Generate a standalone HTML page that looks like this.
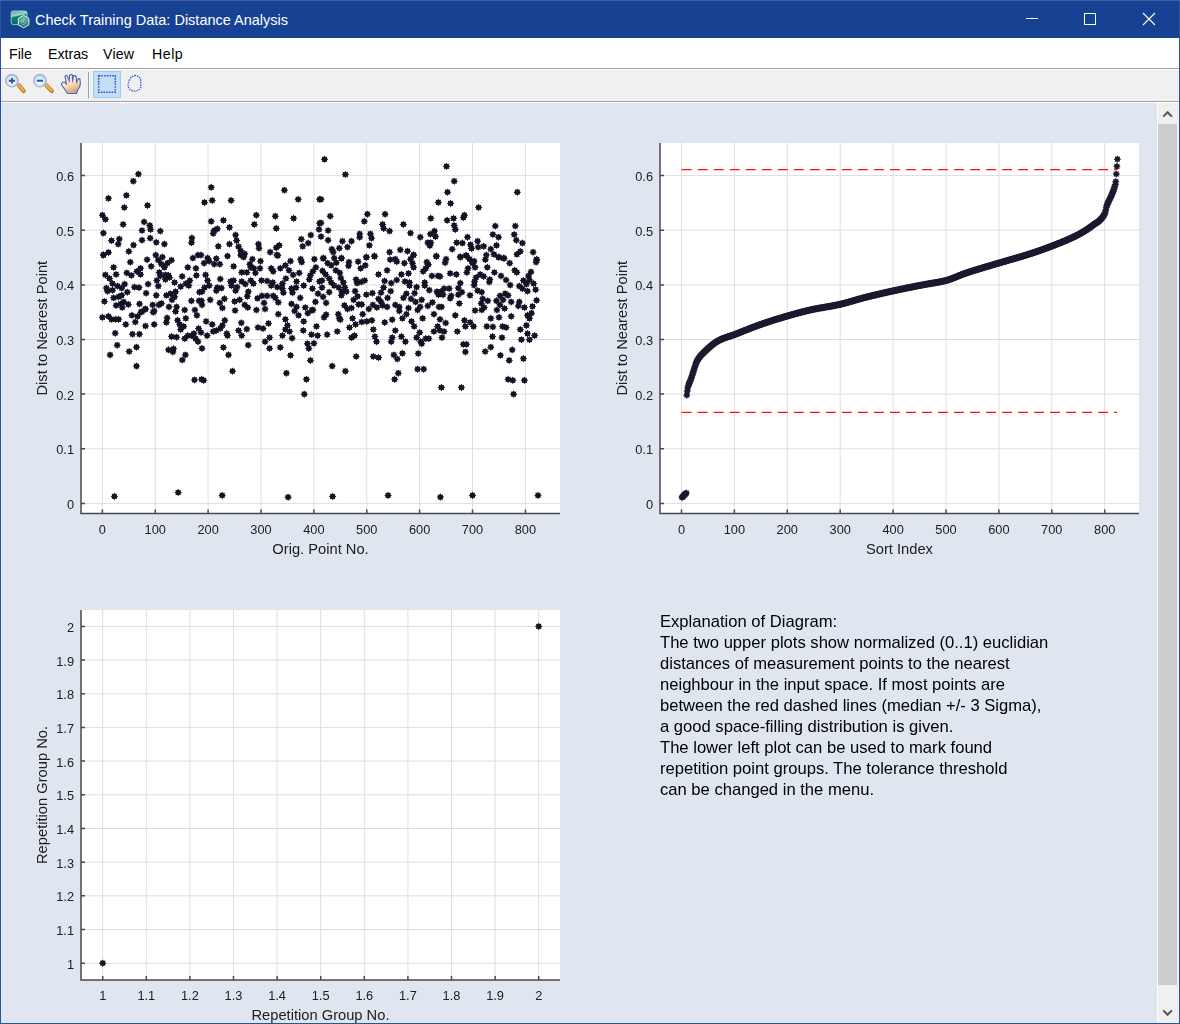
<!DOCTYPE html>
<html><head><meta charset="utf-8"><title>Check Training Data: Distance Analysis</title>
<style>
html,body{margin:0;padding:0;width:1180px;height:1024px;overflow:hidden;background:#dfe6f0;font-family:"Liberation Sans",sans-serif;}
#title{position:absolute;left:0;top:0;width:1180px;height:38px;background:#174294;color:#fff;}
#title .t{position:absolute;left:35px;top:11px;font-size:14.5px;line-height:18px;white-space:nowrap;}
#menu{position:absolute;left:1px;top:38px;width:1178px;height:30px;background:#fff;border-bottom:1px solid #a0a0a0;}
#menu span{position:absolute;top:7px;font-size:14.2px;line-height:18px;color:#000;}
#toolbar{position:absolute;left:1px;top:69px;width:1178px;height:31px;background:#f0f0f0;border-top:1px solid #fff;border-bottom:1px solid #a0a0a0;}
#gap{position:absolute;left:1px;top:102px;width:1178px;height:1px;background:#fff;}
#plots{position:absolute;left:0;top:0;will-change:transform;font-family:"Liberation Sans",sans-serif;fill:#202020;}
#sb{position:absolute;left:1157px;top:103px;width:22px;height:920px;background:#f0f0f0;border-left:1px solid #fff;box-sizing:border-box;}
#thumb{position:absolute;left:1158px;top:124px;width:19px;height:861px;background:#cdcdcd;}
.bl{position:absolute;left:0;top:0;width:1px;height:1024px;background:#2c51a0;}
.br{position:absolute;left:1179px;top:0;width:1px;height:1024px;background:#2c51a0;}
.bb{position:absolute;left:0;top:1023px;width:1180px;height:1px;background:#2c51a0;}
.bt{position:absolute;left:0;top:0;width:1180px;height:1px;background:#3d5fa6;}
</style></head><body>
<div id="title">
<svg style="position:absolute;left:0;top:0" width="40" height="38" viewBox="0 0 40 38">
<defs><linearGradient id="tg" x1="0" y1="0" x2="0.25" y2="1"><stop offset="0" stop-color="#3aa894"/><stop offset="0.38" stop-color="#9ed6cb"/><stop offset="0.48" stop-color="#0d7f70"/><stop offset="1" stop-color="#06695b"/></linearGradient>
<linearGradient id="hg" x1="0" y1="0" x2="0" y2="1"><stop offset="0" stop-color="#5fb5a6"/><stop offset="1" stop-color="#0f7263"/></linearGradient></defs>
<rect x="11.2" y="11" width="15.8" height="13.6" rx="2" fill="url(#tg)" stroke="#cfe9e3" stroke-width="0.7"/>
<path d="M23.6 15.3L28.9 18.4V24.8L23.6 27.8L18.3 24.8V18.4Z" fill="url(#hg)" stroke="#e6f3ef" stroke-width="1"/>
<path d="M23.5 18L26.8 21.5L23.5 25L20.2 21.5Z" fill="none" stroke="#f4fbf9" stroke-width="0.9" stroke-dasharray="1 0.7"/>
<path d="M21.8 21.5H25.2M23.5 19.8V23.2" stroke="#d8efea" stroke-width="0.8" stroke-dasharray="0.9 0.8"/>
</svg>
<div class="t">Check Training Data: Distance Analysis</div>
<svg style="position:absolute;left:1020px;top:8px" width="150" height="22" viewBox="0 0 150 22">
<path d="M6 10.5H18" stroke="#fff" stroke-width="1"/>
<rect x="64.5" y="5.5" width="11" height="11" fill="none" stroke="#fff" stroke-width="1"/>
<path d="M123 5L135 17M135 5L123 17" stroke="#fff" stroke-width="1.1"/>
</svg>
</div>
<div id="menu"><span style="left:8px">File</span><span style="left:47px">Extras</span><span style="left:102px;letter-spacing:0.2px">View</span><span style="left:151px;letter-spacing:0.5px">Help</span></div>
<div id="toolbar">
<svg width="160" height="31" viewBox="0 69 160 31" style="position:absolute;left:-1px;top:-1px">
<defs><radialGradient id="lens" cx="0.45" cy="0.6" r="0.65"><stop offset="0" stop-color="#ffffff"/><stop offset="0.55" stop-color="#d2f1f4"/><stop offset="1" stop-color="#a6dbe6"/></radialGradient>
<linearGradient id="hand" x1="0" y1="0" x2="0.4" y2="1"><stop offset="0" stop-color="#ffe9d2"/><stop offset="0.6" stop-color="#fde0c0"/><stop offset="1" stop-color="#d9a573"/></linearGradient></defs>
<path d="M18.8 85.2L23.6 91" stroke="#a8742c" stroke-width="4.2" stroke-linecap="round"/>
<path d="M18.6 84.8L23.2 90.4" stroke="#f5ae3c" stroke-width="2.8" stroke-linecap="round"/>
<circle cx="11.9" cy="80.7" r="6.1" fill="url(#lens)" stroke="#aab2e2" stroke-width="1.6"/>
<path d="M8.8 80.7H15M11.9 77.9V83.6" stroke="#3a4f8c" stroke-width="2"/>
<path d="M46.6 85.6L51.8 91" stroke="#a8742c" stroke-width="4.2" stroke-linecap="round"/>
<path d="M46.4 85.2L51.4 90.4" stroke="#f5ae3c" stroke-width="2.8" stroke-linecap="round"/>
<circle cx="39.9" cy="80.7" r="6.1" fill="url(#lens)" stroke="#aab2e2" stroke-width="1.6"/>
<path d="M36.8 80.7H43" stroke="#3a4f8c" stroke-width="2"/>
<path d="M67.5 93.5L63.8 88L61.3 84.2L62.6 82.2L65 82.2L66.4 84.3L65.6 79.2L64.9 76.5L65.9 75.2L67.2 75.9L69.2 80.8L69.6 75.2L71 74.4L72.4 75.1L72.6 80.8L73.4 75.6L74.9 75.5L76.3 77L76.6 82L78.4 78.6L79.9 78.9L80.4 83.5L79.6 87.2L77.6 90L76.6 93.5Z" fill="url(#hand)" stroke="#4566c8" stroke-width="1.1" stroke-linejoin="round"/>
<path d="M69.2 80.8V82.5M72.6 80.8V82.5M76.6 82V83.5" stroke="#5a78d0" stroke-width="0.9"/>
<path d="M88.5 72V98.5" stroke="#a0a0a0" stroke-width="1"/>
<rect x="93.5" y="71.5" width="27" height="26" fill="#c6def3" stroke="#99ccf3" stroke-width="1"/>
<rect x="98.7" y="75.8" width="16.6" height="16.4" fill="none" stroke="#3452d6" stroke-width="1.5" stroke-dasharray="1.6 1.1"/>
<path d="M134.5 75.5C137.5 75.4 140.5 77.5 140.7 80L140.8 87.5C139.5 90.3 137 91.1 134 91.1C130.8 90.9 128.2 88.5 128.1 85.5C128 82 130 78.2 132 76.6Z" fill="none" stroke="#2b50ee" stroke-width="1.3" stroke-dasharray="1.4 1.1"/>
</svg>
</div>
<div id="gap"></div>
<svg id="plots" width="1180" height="1024" viewBox="0 0 1180 1024"><defs><path id="m" d="M0 -3.75L-0.98 -2.36L-2.65 -2.65L-2.36 -0.98L-3.75 0L-2.36 0.98L-2.65 2.65L-0.98 2.36L0 3.75L0.98 2.36L2.65 2.65L2.36 0.98L3.75 0L2.36 -0.98L2.65 -2.65L0.98 -2.36Z" fill="#131326"/><path id="m2" d="M0 -3.75L-0.98 -2.36L-2.65 -2.65L-2.36 -0.98L-3.75 0L-2.36 0.98L-2.65 2.65L-0.98 2.36L0 3.75L0.98 2.36L2.65 2.65L2.36 0.98L3.75 0L2.36 -0.98L2.65 -2.65L0.98 -2.36Z" fill="#1b1b30"/></defs><rect x="81.0" y="143.0" width="479.0" height="370.5" fill="#fff"/><path d="M102.4 143.0V513.5M155.3 143.0V513.5M208.1 143.0V513.5M261.0 143.0V513.5M313.9 143.0V513.5M366.8 143.0V513.5M419.6 143.0V513.5M472.5 143.0V513.5M525.4 143.0V513.5M81.0 503.4H560.0M81.0 448.8H560.0M81.0 394.1H560.0M81.0 339.5H560.0M81.0 284.9H560.0M81.0 230.2H560.0M81.0 175.6H560.0" stroke="#dedede" stroke-width="1" fill="none"/><g><use href="#m" x="138.4" y="174.1"/><use href="#m" x="133.3" y="181.2"/><use href="#m" x="108.5" y="198.3"/><use href="#m" x="126.4" y="195.3"/><use href="#m" x="124.3" y="207.5"/><use href="#m" x="147.5" y="205.4"/><use href="#m" x="102.4" y="215.2"/><use href="#m" x="105.4" y="219.3"/><use href="#m" x="123.1" y="224.4"/><use href="#m" x="103.4" y="233.1"/><use href="#m" x="111.5" y="240.6"/><use href="#m" x="119.3" y="239.0"/><use href="#m" x="118.2" y="244.1"/><use href="#m" x="144.1" y="221.9"/><use href="#m" x="149.8" y="225.4"/><use href="#m" x="150.6" y="229.4"/><use href="#m" x="142.0" y="230.5"/><use href="#m" x="160.3" y="231.1"/><use href="#m" x="150.2" y="238.2"/><use href="#m" x="142.0" y="240.2"/><use href="#m" x="156.3" y="242.3"/><use href="#m" x="164.4" y="244.1"/><use href="#m" x="133.5" y="245.1"/><use href="#m" x="128.8" y="251.4"/><use href="#m" x="103.4" y="254.9"/><use href="#m" x="108.5" y="252.4"/><use href="#m" x="211.2" y="187.3"/><use href="#m" x="212.2" y="200.4"/><use href="#m" x="204.5" y="202.4"/><use href="#m" x="231.1" y="200.4"/><use href="#m" x="211.2" y="221.3"/><use href="#m" x="223.4" y="220.3"/><use href="#m" x="229.5" y="227.4"/><use href="#m" x="214.2" y="230.5"/><use href="#m" x="217.3" y="228.8"/><use href="#m" x="213.2" y="233.5"/><use href="#m" x="235.6" y="235.1"/><use href="#m" x="229.5" y="244.1"/><use href="#m" x="218.3" y="246.3"/><use href="#m" x="191.9" y="238.0"/><use href="#m" x="191.5" y="242.7"/><use href="#m" x="256.3" y="215.2"/><use href="#m" x="254.3" y="224.4"/><use href="#m" x="275.3" y="216.2"/><use href="#m" x="276.3" y="228.4"/><use href="#m" x="284.4" y="190.2"/><use href="#m" x="298.2" y="199.3"/><use href="#m" x="293.6" y="218.3"/><use href="#m" x="319.6" y="199.3"/><use href="#m" x="301.3" y="239.2"/><use href="#m" x="310.8" y="235.1"/><use href="#m" x="302.7" y="246.3"/><use href="#m" x="308.2" y="243.1"/><use href="#m" x="236.6" y="240.6"/><use href="#m" x="238.6" y="246.7"/><use href="#m" x="240.7" y="250.8"/><use href="#m" x="242.7" y="254.9"/><use href="#m" x="244.7" y="253.8"/><use href="#m" x="258.4" y="244.1"/><use href="#m" x="259.0" y="248.2"/><use href="#m" x="270.2" y="252.2"/><use href="#m" x="276.3" y="247.7"/><use href="#m" x="279.3" y="245.3"/><use href="#m" x="276.9" y="254.9"/><use href="#m" x="319.6" y="223.3"/><use href="#m" x="319.0" y="229.4"/><use href="#m" x="324.5" y="159.3"/><use href="#m" x="345.4" y="174.5"/><use href="#m" x="321.0" y="199.3"/><use href="#m" x="330.2" y="216.2"/><use href="#m" x="367.4" y="214.2"/><use href="#m" x="364.3" y="221.3"/><use href="#m" x="385.1" y="214.2"/><use href="#m" x="382.6" y="224.4"/><use href="#m" x="383.7" y="228.4"/><use href="#m" x="389.6" y="231.1"/><use href="#m" x="403.4" y="224.4"/><use href="#m" x="321.0" y="222.9"/><use href="#m" x="328.1" y="230.5"/><use href="#m" x="321.0" y="236.6"/><use href="#m" x="328.1" y="240.2"/><use href="#m" x="359.7" y="233.9"/><use href="#m" x="359.7" y="237.2"/><use href="#m" x="370.4" y="233.9"/><use href="#m" x="371.5" y="238.2"/><use href="#m" x="369.4" y="245.3"/><use href="#m" x="342.4" y="241.2"/><use href="#m" x="351.5" y="241.2"/><use href="#m" x="347.5" y="247.1"/><use href="#m" x="339.3" y="248.2"/><use href="#m" x="331.8" y="249.2"/><use href="#m" x="333.2" y="252.2"/><use href="#m" x="410.5" y="233.1"/><use href="#m" x="420.3" y="237.2"/><use href="#m" x="446.5" y="166.4"/><use href="#m" x="454.2" y="181.2"/><use href="#m" x="447.5" y="192.2"/><use href="#m" x="438.4" y="202.4"/><use href="#m" x="450.6" y="203.4"/><use href="#m" x="430.8" y="218.3"/><use href="#m" x="447.1" y="220.3"/><use href="#m" x="453.6" y="218.3"/><use href="#m" x="464.4" y="215.2"/><use href="#m" x="463.4" y="217.6"/><use href="#m" x="478.6" y="207.5"/><use href="#m" x="454.2" y="225.4"/><use href="#m" x="455.3" y="229.4"/><use href="#m" x="434.5" y="231.1"/><use href="#m" x="430.4" y="234.1"/><use href="#m" x="435.5" y="236.6"/><use href="#m" x="427.8" y="242.7"/><use href="#m" x="430.8" y="242.7"/><use href="#m" x="429.8" y="245.7"/><use href="#m" x="467.5" y="237.2"/><use href="#m" x="456.7" y="242.7"/><use href="#m" x="462.4" y="243.1"/><use href="#m" x="470.5" y="244.7"/><use href="#m" x="471.5" y="248.4"/><use href="#m" x="477.6" y="241.2"/><use href="#m" x="478.2" y="247.1"/><use href="#m" x="483.7" y="246.3"/><use href="#m" x="490.8" y="249.2"/><use href="#m" x="452.2" y="249.2"/><use href="#m" x="495.3" y="226.0"/><use href="#m" x="492.9" y="234.5"/><use href="#m" x="498.6" y="237.2"/><use href="#m" x="496.5" y="245.3"/><use href="#m" x="515.3" y="226.0"/><use href="#m" x="514.2" y="234.5"/><use href="#m" x="516.3" y="240.2"/><use href="#m" x="522.4" y="243.1"/><use href="#m" x="520.3" y="251.4"/><use href="#m" x="516.9" y="254.3"/><use href="#m" x="517.3" y="192.2"/><use href="#m" x="533.1" y="252.2"/><use href="#m" x="536.6" y="259.3"/><use href="#m" x="436.3" y="256.3"/><use href="#m" x="460.3" y="256.9"/><use href="#m" x="466.4" y="255.5"/><use href="#m" x="493.9" y="254.3"/><use href="#m" x="499.0" y="257.3"/><use href="#m" x="504.1" y="258.3"/><use href="#m" x="389.6" y="252.2"/><use href="#m" x="400.3" y="249.8"/><use href="#m" x="407.5" y="251.2"/><use href="#m" x="413.6" y="254.9"/><use href="#m" x="374.5" y="256.3"/><use href="#m" x="366.4" y="257.3"/><use href="#m" x="323.1" y="258.5"/><use href="#m" x="341.4" y="258.3"/><use href="#m" x="102.4" y="317.3"/><use href="#m" x="108.5" y="316.3"/><use href="#m" x="111.5" y="319.3"/><use href="#m" x="115.6" y="319.3"/><use href="#m" x="118.6" y="319.3"/><use href="#m" x="125.8" y="324.4"/><use href="#m" x="115.2" y="333.2"/><use href="#m" x="117.2" y="345.2"/><use href="#m" x="110.1" y="354.9"/><use href="#m" x="129.2" y="351.5"/><use href="#m" x="132.5" y="334.2"/><use href="#m" x="139.4" y="334.2"/><use href="#m" x="136.5" y="347.2"/><use href="#m" x="136.5" y="366.1"/><use href="#m" x="135.3" y="322.0"/><use href="#m" x="137.6" y="316.3"/><use href="#m" x="131.9" y="315.3"/><use href="#m" x="141.0" y="312.2"/><use href="#m" x="145.1" y="309.2"/><use href="#m" x="145.5" y="326.0"/><use href="#m" x="154.2" y="324.4"/><use href="#m" x="153.2" y="312.2"/><use href="#m" x="167.1" y="317.9"/><use href="#m" x="166.4" y="322.4"/><use href="#m" x="171.5" y="336.6"/><use href="#m" x="176.6" y="337.2"/><use href="#m" x="168.5" y="349.8"/><use href="#m" x="173.6" y="348.8"/><use href="#m" x="172.9" y="351.9"/><use href="#m" x="182.3" y="360.0"/><use href="#m" x="185.4" y="354.9"/><use href="#m" x="177.6" y="320.3"/><use href="#m" x="179.7" y="324.4"/><use href="#m" x="180.7" y="329.5"/><use href="#m" x="183.7" y="326.4"/><use href="#m" x="185.8" y="318.3"/><use href="#m" x="184.7" y="338.6"/><use href="#m" x="187.8" y="335.6"/><use href="#m" x="191.5" y="335.6"/><use href="#m" x="195.5" y="338.6"/><use href="#m" x="198.0" y="341.7"/><use href="#m" x="202.0" y="348.4"/><use href="#m" x="198.6" y="328.5"/><use href="#m" x="201.0" y="332.5"/><use href="#m" x="193.9" y="333.6"/><use href="#m" x="194.5" y="379.9"/><use href="#m" x="201.6" y="379.3"/><use href="#m" x="203.7" y="380.3"/><use href="#m" x="196.9" y="315.3"/><use href="#m" x="207.1" y="335.6"/><use href="#m" x="206.1" y="321.4"/><use href="#m" x="213.2" y="331.5"/><use href="#m" x="212.2" y="324.4"/><use href="#m" x="216.3" y="330.5"/><use href="#m" x="220.3" y="328.5"/><use href="#m" x="222.4" y="325.4"/><use href="#m" x="224.8" y="320.3"/><use href="#m" x="226.8" y="333.6"/><use href="#m" x="227.5" y="335.6"/><use href="#m" x="223.4" y="347.4"/><use href="#m" x="228.5" y="354.9"/><use href="#m" x="232.5" y="371.2"/><use href="#m" x="238.6" y="330.5"/><use href="#m" x="241.3" y="322.8"/><use href="#m" x="241.7" y="335.6"/><use href="#m" x="246.8" y="329.1"/><use href="#m" x="248.2" y="345.2"/><use href="#m" x="258.0" y="327.5"/><use href="#m" x="263.1" y="328.5"/><use href="#m" x="268.5" y="323.4"/><use href="#m" x="265.1" y="341.7"/><use href="#m" x="269.6" y="337.6"/><use href="#m" x="269.6" y="348.4"/><use href="#m" x="280.3" y="347.4"/><use href="#m" x="278.3" y="314.2"/><use href="#m" x="285.4" y="319.3"/><use href="#m" x="287.5" y="325.4"/><use href="#m" x="282.4" y="335.6"/><use href="#m" x="285.4" y="329.5"/><use href="#m" x="289.5" y="331.5"/><use href="#m" x="292.1" y="338.2"/><use href="#m" x="290.5" y="355.3"/><use href="#m" x="286.4" y="373.2"/><use href="#m" x="298.6" y="315.3"/><use href="#m" x="303.7" y="321.4"/><use href="#m" x="303.3" y="330.5"/><use href="#m" x="307.8" y="313.2"/><use href="#m" x="311.9" y="310.2"/><use href="#m" x="316.5" y="326.4"/><use href="#m" x="311.5" y="334.6"/><use href="#m" x="317.6" y="335.6"/><use href="#m" x="307.4" y="343.7"/><use href="#m" x="308.8" y="348.4"/><use href="#m" x="313.9" y="343.3"/><use href="#m" x="310.4" y="360.4"/><use href="#m" x="306.4" y="379.3"/><use href="#m" x="304.3" y="394.2"/><use href="#m" x="324.1" y="317.3"/><use href="#m" x="326.1" y="314.6"/><use href="#m" x="338.3" y="314.2"/><use href="#m" x="339.3" y="318.3"/><use href="#m" x="340.3" y="319.7"/><use href="#m" x="337.3" y="331.5"/><use href="#m" x="327.1" y="334.6"/><use href="#m" x="349.5" y="327.5"/><use href="#m" x="352.5" y="318.3"/><use href="#m" x="355.6" y="324.4"/><use href="#m" x="351.5" y="337.6"/><use href="#m" x="354.6" y="335.6"/><use href="#m" x="356.2" y="356.5"/><use href="#m" x="332.2" y="366.1"/><use href="#m" x="345.4" y="371.2"/><use href="#m" x="361.7" y="322.0"/><use href="#m" x="362.7" y="314.2"/><use href="#m" x="366.8" y="321.4"/><use href="#m" x="371.9" y="320.3"/><use href="#m" x="373.3" y="329.5"/><use href="#m" x="374.9" y="336.6"/><use href="#m" x="376.5" y="341.7"/><use href="#m" x="373.3" y="356.5"/><use href="#m" x="378.6" y="357.6"/><use href="#m" x="384.7" y="322.4"/><use href="#m" x="392.2" y="319.7"/><use href="#m" x="395.3" y="330.5"/><use href="#m" x="391.2" y="341.7"/><use href="#m" x="392.2" y="337.6"/><use href="#m" x="401.4" y="336.6"/><use href="#m" x="405.4" y="341.7"/><use href="#m" x="393.8" y="354.9"/><use href="#m" x="397.3" y="359.0"/><use href="#m" x="402.4" y="353.3"/><use href="#m" x="398.3" y="373.2"/><use href="#m" x="394.6" y="379.3"/><use href="#m" x="402.4" y="318.3"/><use href="#m" x="406.4" y="314.2"/><use href="#m" x="411.5" y="321.4"/><use href="#m" x="414.2" y="326.4"/><use href="#m" x="419.7" y="332.5"/><use href="#m" x="416.6" y="337.6"/><use href="#m" x="420.7" y="341.7"/><use href="#m" x="421.7" y="343.7"/><use href="#m" x="425.8" y="338.6"/><use href="#m" x="428.8" y="338.6"/><use href="#m" x="418.2" y="353.5"/><use href="#m" x="417.6" y="369.2"/><use href="#m" x="423.7" y="369.2"/><use href="#m" x="422.7" y="318.3"/><use href="#m" x="433.9" y="314.2"/><use href="#m" x="440.0" y="319.3"/><use href="#m" x="445.7" y="323.0"/><use href="#m" x="437.6" y="326.4"/><use href="#m" x="433.9" y="331.5"/><use href="#m" x="440.0" y="330.5"/><use href="#m" x="444.1" y="331.5"/><use href="#m" x="442.0" y="337.6"/><use href="#m" x="441.4" y="387.5"/><use href="#m" x="461.4" y="387.5"/><use href="#m" x="455.3" y="315.3"/><use href="#m" x="457.3" y="331.5"/><use href="#m" x="464.4" y="320.3"/><use href="#m" x="465.4" y="326.4"/><use href="#m" x="470.1" y="322.4"/><use href="#m" x="473.6" y="326.4"/><use href="#m" x="463.4" y="344.3"/><use href="#m" x="466.4" y="344.3"/><use href="#m" x="465.4" y="351.9"/><use href="#m" x="486.8" y="326.4"/><use href="#m" x="490.8" y="318.3"/><use href="#m" x="492.9" y="326.8"/><use href="#m" x="499.0" y="317.3"/><use href="#m" x="492.5" y="336.6"/><use href="#m" x="502.0" y="337.6"/><use href="#m" x="502.6" y="326.4"/><use href="#m" x="506.1" y="327.5"/><use href="#m" x="490.8" y="347.2"/><use href="#m" x="485.2" y="351.5"/><use href="#m" x="500.4" y="355.3"/><use href="#m" x="512.2" y="349.8"/><use href="#m" x="509.2" y="360.4"/><use href="#m" x="523.4" y="358.6"/><use href="#m" x="508.1" y="379.3"/><use href="#m" x="512.8" y="380.3"/><use href="#m" x="524.4" y="380.3"/><use href="#m" x="513.6" y="394.2"/><use href="#m" x="511.2" y="316.3"/><use href="#m" x="520.3" y="329.5"/><use href="#m" x="526.4" y="325.4"/><use href="#m" x="527.5" y="315.3"/><use href="#m" x="529.5" y="318.3"/><use href="#m" x="531.5" y="313.2"/><use href="#m" x="527.5" y="333.6"/><use href="#m" x="534.6" y="335.6"/><use href="#m" x="529.5" y="339.7"/><use href="#m" x="521.4" y="339.7"/><use href="#m" x="114.4" y="496.4"/><use href="#m" x="178.2" y="492.5"/><use href="#m" x="222.2" y="495.4"/><use href="#m" x="288.1" y="497.2"/><use href="#m" x="332.6" y="496.5"/><use href="#m" x="388.1" y="495.4"/><use href="#m" x="440.4" y="497.1"/><use href="#m" x="472.5" y="495.4"/><use href="#m" x="538.0" y="495.4"/><use href="#m" x="103.4" y="255.1"/><use href="#m" x="155.8" y="255.1"/><use href="#m" x="162.4" y="257.1"/><use href="#m" x="147.1" y="259.7"/><use href="#m" x="158.3" y="260.2"/><use href="#m" x="171.5" y="260.2"/><use href="#m" x="167.5" y="263.2"/><use href="#m" x="164.4" y="267.3"/><use href="#m" x="161.4" y="264.2"/><use href="#m" x="192.9" y="258.1"/><use href="#m" x="198.0" y="255.1"/><use href="#m" x="130.3" y="262.2"/><use href="#m" x="113.6" y="267.3"/><use href="#m" x="151.2" y="266.3"/><use href="#m" x="140.5" y="268.3"/><use href="#m" x="136.9" y="271.4"/><use href="#m" x="140.5" y="274.4"/><use href="#m" x="126.8" y="272.9"/><use href="#m" x="131.4" y="275.4"/><use href="#m" x="116.1" y="274.4"/><use href="#m" x="105.4" y="274.9"/><use href="#m" x="109.5" y="278.5"/><use href="#m" x="187.8" y="267.3"/><use href="#m" x="195.9" y="268.3"/><use href="#m" x="196.4" y="275.4"/><use href="#m" x="182.2" y="276.4"/><use href="#m" x="159.3" y="272.4"/><use href="#m" x="160.3" y="275.9"/><use href="#m" x="165.4" y="274.9"/><use href="#m" x="168.5" y="275.4"/><use href="#m" x="169.5" y="277.5"/><use href="#m" x="165.4" y="279.5"/><use href="#m" x="156.8" y="280.5"/><use href="#m" x="174.6" y="282.5"/><use href="#m" x="180.7" y="286.6"/><use href="#m" x="189.8" y="280.5"/><use href="#m" x="188.8" y="285.6"/><use href="#m" x="185.8" y="283.6"/><use href="#m" x="112.5" y="283.6"/><use href="#m" x="117.6" y="286.1"/><use href="#m" x="124.7" y="284.1"/><use href="#m" x="121.7" y="288.1"/><use href="#m" x="106.4" y="288.1"/><use href="#m" x="107.5" y="291.2"/><use href="#m" x="112.5" y="290.2"/><use href="#m" x="134.4" y="287.1"/><use href="#m" x="139.0" y="287.6"/><use href="#m" x="148.1" y="284.1"/><use href="#m" x="158.3" y="286.1"/><use href="#m" x="127.3" y="292.2"/><use href="#m" x="121.7" y="295.3"/><use href="#m" x="118.6" y="296.8"/><use href="#m" x="113.6" y="297.8"/><use href="#m" x="123.7" y="301.9"/><use href="#m" x="120.7" y="303.9"/><use href="#m" x="116.1" y="305.4"/><use href="#m" x="122.2" y="307.5"/><use href="#m" x="128.3" y="304.4"/><use href="#m" x="104.4" y="301.4"/><use href="#m" x="146.1" y="293.2"/><use href="#m" x="156.3" y="295.3"/><use href="#m" x="166.4" y="295.3"/><use href="#m" x="170.5" y="293.7"/><use href="#m" x="175.6" y="291.7"/><use href="#m" x="174.6" y="296.8"/><use href="#m" x="172.0" y="299.8"/><use href="#m" x="191.4" y="300.8"/><use href="#m" x="199.0" y="300.8"/><use href="#m" x="199.5" y="292.2"/><use href="#m" x="139.5" y="303.9"/><use href="#m" x="145.6" y="309.0"/><use href="#m" x="142.0" y="311.5"/><use href="#m" x="152.7" y="304.9"/><use href="#m" x="154.2" y="311.0"/><use href="#m" x="161.4" y="303.4"/><use href="#m" x="158.8" y="304.9"/><use href="#m" x="169.0" y="306.9"/><use href="#m" x="176.6" y="306.9"/><use href="#m" x="175.6" y="311.5"/><use href="#m" x="184.7" y="310.0"/><use href="#m" x="194.9" y="310.0"/><use href="#m" x="201.0" y="255.1"/><use href="#m" x="207.6" y="258.1"/><use href="#m" x="209.2" y="261.2"/><use href="#m" x="204.1" y="263.2"/><use href="#m" x="216.3" y="258.6"/><use href="#m" x="214.2" y="264.2"/><use href="#m" x="219.8" y="264.2"/><use href="#m" x="227.5" y="256.1"/><use href="#m" x="233.6" y="266.3"/><use href="#m" x="240.7" y="255.1"/><use href="#m" x="243.7" y="257.1"/><use href="#m" x="252.4" y="259.2"/><use href="#m" x="249.8" y="264.2"/><use href="#m" x="253.9" y="268.3"/><use href="#m" x="255.4" y="272.9"/><use href="#m" x="250.8" y="267.3"/><use href="#m" x="260.0" y="268.3"/><use href="#m" x="260.5" y="261.2"/><use href="#m" x="241.7" y="272.4"/><use href="#m" x="246.8" y="272.4"/><use href="#m" x="277.8" y="255.6"/><use href="#m" x="271.2" y="268.3"/><use href="#m" x="273.2" y="271.4"/><use href="#m" x="280.3" y="268.3"/><use href="#m" x="285.4" y="265.3"/><use href="#m" x="290.5" y="261.2"/><use href="#m" x="289.0" y="270.3"/><use href="#m" x="300.7" y="259.2"/><use href="#m" x="301.7" y="262.2"/><use href="#m" x="314.4" y="259.2"/><use href="#m" x="315.9" y="267.3"/><use href="#m" x="312.9" y="271.4"/><use href="#m" x="205.6" y="274.9"/><use href="#m" x="207.6" y="280.5"/><use href="#m" x="209.2" y="285.6"/><use href="#m" x="204.6" y="287.6"/><use href="#m" x="202.0" y="291.7"/><use href="#m" x="220.3" y="279.0"/><use href="#m" x="217.3" y="287.6"/><use href="#m" x="221.4" y="288.1"/><use href="#m" x="216.3" y="290.7"/><use href="#m" x="230.5" y="281.5"/><use href="#m" x="233.6" y="280.5"/><use href="#m" x="231.5" y="285.6"/><use href="#m" x="237.1" y="287.1"/><use href="#m" x="235.6" y="290.7"/><use href="#m" x="241.7" y="281.5"/><use href="#m" x="245.3" y="284.1"/><use href="#m" x="250.8" y="280.5"/><use href="#m" x="253.4" y="283.6"/><use href="#m" x="248.3" y="291.7"/><use href="#m" x="247.3" y="296.3"/><use href="#m" x="261.5" y="280.5"/><use href="#m" x="267.1" y="281.0"/><use href="#m" x="272.7" y="282.5"/><use href="#m" x="271.2" y="285.6"/><use href="#m" x="277.3" y="287.1"/><use href="#m" x="282.4" y="283.6"/><use href="#m" x="285.9" y="278.5"/><use href="#m" x="283.4" y="292.7"/><use href="#m" x="282.4" y="288.6"/><use href="#m" x="293.1" y="274.9"/><use href="#m" x="299.2" y="272.9"/><use href="#m" x="296.6" y="281.5"/><use href="#m" x="291.5" y="288.6"/><use href="#m" x="292.5" y="292.7"/><use href="#m" x="296.1" y="287.6"/><use href="#m" x="303.7" y="285.6"/><use href="#m" x="309.3" y="279.5"/><use href="#m" x="310.3" y="275.4"/><use href="#m" x="312.4" y="288.6"/><use href="#m" x="318.0" y="293.7"/><use href="#m" x="319.5" y="281.5"/><use href="#m" x="210.2" y="299.8"/><use href="#m" x="201.5" y="300.8"/><use href="#m" x="202.0" y="304.9"/><use href="#m" x="224.4" y="298.8"/><use href="#m" x="219.8" y="302.9"/><use href="#m" x="222.4" y="308.0"/><use href="#m" x="235.1" y="310.5"/><use href="#m" x="234.6" y="301.4"/><use href="#m" x="239.7" y="299.8"/><use href="#m" x="244.7" y="304.9"/><use href="#m" x="247.8" y="307.5"/><use href="#m" x="257.5" y="298.3"/><use href="#m" x="262.0" y="295.8"/><use href="#m" x="267.1" y="295.8"/><use href="#m" x="273.2" y="295.8"/><use href="#m" x="275.3" y="297.8"/><use href="#m" x="278.3" y="302.4"/><use href="#m" x="264.1" y="302.9"/><use href="#m" x="265.1" y="309.0"/><use href="#m" x="256.4" y="310.0"/><use href="#m" x="300.2" y="297.8"/><use href="#m" x="291.5" y="303.9"/><use href="#m" x="296.6" y="306.9"/><use href="#m" x="294.6" y="311.0"/><use href="#m" x="305.3" y="307.5"/><use href="#m" x="312.9" y="310.0"/><use href="#m" x="315.4" y="301.9"/><use href="#m" x="323.6" y="258.1"/><use href="#m" x="334.2" y="258.1"/><use href="#m" x="341.4" y="258.1"/><use href="#m" x="327.6" y="263.2"/><use href="#m" x="331.2" y="265.3"/><use href="#m" x="336.3" y="262.7"/><use href="#m" x="349.0" y="262.2"/><use href="#m" x="348.5" y="265.8"/><use href="#m" x="358.1" y="261.7"/><use href="#m" x="360.7" y="268.3"/><use href="#m" x="365.3" y="265.3"/><use href="#m" x="366.3" y="257.1"/><use href="#m" x="374.4" y="256.1"/><use href="#m" x="390.2" y="259.7"/><use href="#m" x="395.3" y="259.2"/><use href="#m" x="396.8" y="261.7"/><use href="#m" x="404.4" y="263.2"/><use href="#m" x="413.6" y="255.1"/><use href="#m" x="410.5" y="259.2"/><use href="#m" x="412.5" y="263.2"/><use href="#m" x="413.6" y="267.3"/><use href="#m" x="426.8" y="262.2"/><use href="#m" x="428.3" y="264.7"/><use href="#m" x="425.8" y="268.3"/><use href="#m" x="423.2" y="271.4"/><use href="#m" x="436.4" y="256.1"/><use href="#m" x="431.9" y="275.9"/><use href="#m" x="438.0" y="275.9"/><use href="#m" x="322.5" y="270.8"/><use href="#m" x="325.6" y="274.4"/><use href="#m" x="329.2" y="278.5"/><use href="#m" x="322.0" y="280.5"/><use href="#m" x="331.2" y="282.5"/><use href="#m" x="334.2" y="285.6"/><use href="#m" x="335.8" y="270.3"/><use href="#m" x="339.8" y="272.9"/><use href="#m" x="340.8" y="278.0"/><use href="#m" x="343.4" y="282.5"/><use href="#m" x="344.9" y="287.6"/><use href="#m" x="338.8" y="287.6"/><use href="#m" x="322.0" y="287.6"/><use href="#m" x="329.2" y="292.2"/><use href="#m" x="323.1" y="296.8"/><use href="#m" x="326.1" y="302.9"/><use href="#m" x="356.1" y="279.5"/><use href="#m" x="357.1" y="283.1"/><use href="#m" x="364.7" y="280.5"/><use href="#m" x="361.2" y="282.0"/><use href="#m" x="378.5" y="274.4"/><use href="#m" x="387.1" y="270.3"/><use href="#m" x="384.6" y="281.0"/><use href="#m" x="391.2" y="283.1"/><use href="#m" x="396.8" y="280.0"/><use href="#m" x="401.4" y="274.4"/><use href="#m" x="408.5" y="273.4"/><use href="#m" x="404.9" y="281.5"/><use href="#m" x="409.5" y="282.5"/><use href="#m" x="409.5" y="285.6"/><use href="#m" x="416.6" y="287.1"/><use href="#m" x="424.7" y="282.5"/><use href="#m" x="424.7" y="285.6"/><use href="#m" x="429.3" y="290.2"/><use href="#m" x="436.9" y="291.7"/><use href="#m" x="438.5" y="294.7"/><use href="#m" x="341.9" y="291.7"/><use href="#m" x="346.4" y="291.7"/><use href="#m" x="341.4" y="295.3"/><use href="#m" x="355.1" y="291.2"/><use href="#m" x="357.6" y="296.3"/><use href="#m" x="353.6" y="299.8"/><use href="#m" x="366.3" y="294.7"/><use href="#m" x="372.4" y="293.2"/><use href="#m" x="383.6" y="287.6"/><use href="#m" x="381.0" y="292.7"/><use href="#m" x="378.5" y="298.8"/><use href="#m" x="381.0" y="301.9"/><use href="#m" x="387.6" y="297.8"/><use href="#m" x="390.7" y="291.2"/><use href="#m" x="406.4" y="293.7"/><use href="#m" x="403.4" y="297.8"/><use href="#m" x="411.0" y="298.8"/><use href="#m" x="414.6" y="293.2"/><use href="#m" x="415.6" y="301.9"/><use href="#m" x="421.7" y="299.8"/><use href="#m" x="432.4" y="302.4"/><use href="#m" x="427.8" y="305.9"/><use href="#m" x="344.4" y="305.4"/><use href="#m" x="347.5" y="309.0"/><use href="#m" x="351.5" y="308.0"/><use href="#m" x="358.6" y="304.4"/><use href="#m" x="361.7" y="304.4"/><use href="#m" x="368.8" y="309.0"/><use href="#m" x="372.9" y="304.9"/><use href="#m" x="376.9" y="307.5"/><use href="#m" x="382.5" y="305.4"/><use href="#m" x="387.1" y="306.9"/><use href="#m" x="395.3" y="304.9"/><use href="#m" x="399.3" y="306.9"/><use href="#m" x="399.3" y="311.0"/><use href="#m" x="408.5" y="308.0"/><use href="#m" x="417.6" y="310.0"/><use href="#m" x="420.2" y="306.9"/><use href="#m" x="439.0" y="306.9"/><use href="#m" x="446.1" y="259.2"/><use href="#m" x="445.1" y="262.7"/><use href="#m" x="460.3" y="257.1"/><use href="#m" x="465.9" y="255.6"/><use href="#m" x="469.5" y="259.2"/><use href="#m" x="474.1" y="261.2"/><use href="#m" x="472.5" y="263.2"/><use href="#m" x="475.1" y="267.3"/><use href="#m" x="468.0" y="268.3"/><use href="#m" x="466.9" y="272.4"/><use href="#m" x="486.3" y="255.1"/><use href="#m" x="485.3" y="259.7"/><use href="#m" x="498.5" y="257.1"/><use href="#m" x="503.6" y="258.1"/><use href="#m" x="509.7" y="263.2"/><use href="#m" x="487.3" y="267.3"/><use href="#m" x="536.6" y="260.2"/><use href="#m" x="536.1" y="262.2"/><use href="#m" x="514.7" y="270.3"/><use href="#m" x="516.8" y="272.4"/><use href="#m" x="494.4" y="272.4"/><use href="#m" x="501.0" y="275.9"/><use href="#m" x="506.1" y="280.0"/><use href="#m" x="510.2" y="285.1"/><use href="#m" x="531.0" y="271.9"/><use href="#m" x="528.5" y="275.9"/><use href="#m" x="523.4" y="280.5"/><use href="#m" x="529.5" y="280.0"/><use href="#m" x="519.3" y="286.1"/><use href="#m" x="522.4" y="288.6"/><use href="#m" x="526.4" y="284.1"/><use href="#m" x="533.6" y="283.6"/><use href="#m" x="535.6" y="289.7"/><use href="#m" x="527.5" y="291.2"/><use href="#m" x="450.2" y="273.4"/><use href="#m" x="456.3" y="274.4"/><use href="#m" x="440.0" y="276.4"/><use href="#m" x="460.3" y="283.1"/><use href="#m" x="458.3" y="288.1"/><use href="#m" x="461.9" y="292.2"/><use href="#m" x="458.3" y="294.7"/><use href="#m" x="449.2" y="288.6"/><use href="#m" x="444.1" y="288.6"/><use href="#m" x="441.0" y="291.7"/><use href="#m" x="443.1" y="294.7"/><use href="#m" x="451.2" y="295.8"/><use href="#m" x="450.2" y="298.3"/><use href="#m" x="470.0" y="295.3"/><use href="#m" x="459.3" y="303.4"/><use href="#m" x="441.5" y="306.9"/><use href="#m" x="480.2" y="274.4"/><use href="#m" x="483.7" y="276.4"/><use href="#m" x="476.1" y="277.5"/><use href="#m" x="474.6" y="281.5"/><use href="#m" x="474.1" y="285.1"/><use href="#m" x="489.8" y="279.5"/><use href="#m" x="489.3" y="282.0"/><use href="#m" x="477.6" y="290.7"/><use href="#m" x="481.7" y="292.2"/><use href="#m" x="482.7" y="298.8"/><use href="#m" x="487.8" y="300.8"/><use href="#m" x="481.2" y="303.4"/><use href="#m" x="484.2" y="307.5"/><use href="#m" x="475.1" y="310.5"/><use href="#m" x="481.7" y="310.0"/><use href="#m" x="500.0" y="295.8"/><use href="#m" x="505.1" y="293.7"/><use href="#m" x="508.1" y="295.3"/><use href="#m" x="503.1" y="299.8"/><use href="#m" x="496.4" y="300.8"/><use href="#m" x="500.0" y="304.9"/><use href="#m" x="511.2" y="301.9"/><use href="#m" x="519.3" y="301.9"/><use href="#m" x="518.3" y="305.9"/><use href="#m" x="524.4" y="307.5"/><use href="#m" x="504.6" y="308.5"/><use href="#m" x="496.9" y="310.0"/><use href="#m" x="532.5" y="306.4"/><use href="#m" x="536.6" y="300.3"/></g><path d="M81.0 143.0V513.5H560.0M102.4 513.5V509.5M155.3 513.5V509.5M208.1 513.5V509.5M261.0 513.5V509.5M313.9 513.5V509.5M366.8 513.5V509.5M419.6 513.5V509.5M472.5 513.5V509.5M525.4 513.5V509.5M81.0 503.4H85.0M81.0 448.8H85.0M81.0 394.1H85.0M81.0 339.5H85.0M81.0 284.9H85.0M81.0 230.2H85.0M81.0 175.6H85.0" stroke="#4a4a4a" stroke-width="1.5" fill="none"/><text x="102.4" y="533.7" text-anchor="middle" font-size="12.8">0</text><text x="155.3" y="533.7" text-anchor="middle" font-size="12.8">100</text><text x="208.1" y="533.7" text-anchor="middle" font-size="12.8">200</text><text x="261.0" y="533.7" text-anchor="middle" font-size="12.8">300</text><text x="313.9" y="533.7" text-anchor="middle" font-size="12.8">400</text><text x="366.8" y="533.7" text-anchor="middle" font-size="12.8">500</text><text x="419.6" y="533.7" text-anchor="middle" font-size="12.8">600</text><text x="472.5" y="533.7" text-anchor="middle" font-size="12.8">700</text><text x="525.4" y="533.7" text-anchor="middle" font-size="12.8">800</text><text x="74.0" y="508.9" text-anchor="end" font-size="12.8">0</text><text x="74.0" y="454.3" text-anchor="end" font-size="12.8">0.1</text><text x="74.0" y="399.6" text-anchor="end" font-size="12.8">0.2</text><text x="74.0" y="345.0" text-anchor="end" font-size="12.8">0.3</text><text x="74.0" y="290.4" text-anchor="end" font-size="12.8">0.4</text><text x="74.0" y="235.8" text-anchor="end" font-size="12.8">0.5</text><text x="74.0" y="181.1" text-anchor="end" font-size="12.8">0.6</text><text x="320.5" y="553.8" text-anchor="middle" font-size="14.7">Orig. Point No.</text><text transform="translate(46.5 328.2) rotate(-90)" text-anchor="middle" font-size="14.7">Dist to Nearest Point</text><rect x="660.0" y="143.0" width="479.0" height="370.5" fill="#fff"/><path d="M681.5 143.0V513.5M734.4 143.0V513.5M787.3 143.0V513.5M840.2 143.0V513.5M893.1 143.0V513.5M946.0 143.0V513.5M998.9 143.0V513.5M1051.8 143.0V513.5M1104.7 143.0V513.5M660.0 503.4H1139.0M660.0 448.8H1139.0M660.0 394.1H1139.0M660.0 339.5H1139.0M660.0 284.9H1139.0M660.0 230.2H1139.0M660.0 175.6H1139.0" stroke="#dedede" stroke-width="1" fill="none"/><g><use href="#m2" x="682.0" y="497.4"/><use href="#m2" x="682.6" y="496.8"/><use href="#m2" x="683.1" y="496.3"/><use href="#m2" x="683.6" y="495.8"/><use href="#m2" x="684.1" y="495.2"/><use href="#m2" x="684.7" y="494.7"/><use href="#m2" x="685.2" y="494.1"/><use href="#m2" x="685.7" y="493.6"/><use href="#m2" x="686.3" y="493.0"/><use href="#m2" x="686.8" y="395.2"/><use href="#m2" x="687.3" y="390.9"/><use href="#m2" x="687.8" y="387.6"/><use href="#m2" x="688.4" y="385.6"/><use href="#m2" x="688.9" y="384.0"/><use href="#m2" x="689.4" y="382.7"/><use href="#m2" x="690.0" y="381.5"/><use href="#m2" x="690.5" y="380.2"/><use href="#m2" x="691.0" y="378.8"/><use href="#m2" x="691.6" y="377.3"/><use href="#m2" x="692.1" y="375.6"/><use href="#m2" x="692.6" y="373.9"/><use href="#m2" x="693.1" y="372.3"/><use href="#m2" x="693.7" y="370.6"/><use href="#m2" x="694.2" y="369.0"/><use href="#m2" x="694.7" y="367.3"/><use href="#m2" x="695.3" y="365.5"/><use href="#m2" x="695.8" y="363.9"/><use href="#m2" x="696.3" y="362.5"/><use href="#m2" x="696.8" y="361.4"/><use href="#m2" x="697.4" y="360.4"/><use href="#m2" x="697.9" y="359.5"/><use href="#m2" x="698.4" y="358.7"/><use href="#m2" x="699.0" y="357.9"/><use href="#m2" x="699.5" y="357.2"/><use href="#m2" x="700.0" y="356.5"/><use href="#m2" x="700.5" y="355.9"/><use href="#m2" x="701.1" y="355.3"/><use href="#m2" x="701.6" y="354.7"/><use href="#m2" x="702.1" y="354.1"/><use href="#m2" x="702.7" y="353.6"/><use href="#m2" x="703.2" y="353.1"/><use href="#m2" x="703.7" y="352.6"/><use href="#m2" x="704.2" y="352.0"/><use href="#m2" x="704.8" y="351.5"/><use href="#m2" x="705.3" y="351.0"/><use href="#m2" x="705.8" y="350.5"/><use href="#m2" x="706.4" y="350.0"/><use href="#m2" x="706.9" y="349.5"/><use href="#m2" x="707.4" y="349.0"/><use href="#m2" x="708.0" y="348.5"/><use href="#m2" x="708.5" y="348.1"/><use href="#m2" x="709.0" y="347.6"/><use href="#m2" x="709.5" y="347.1"/><use href="#m2" x="710.1" y="346.7"/><use href="#m2" x="710.6" y="346.2"/><use href="#m2" x="711.1" y="345.8"/><use href="#m2" x="711.7" y="345.3"/><use href="#m2" x="712.2" y="344.9"/><use href="#m2" x="712.7" y="344.5"/><use href="#m2" x="713.2" y="344.1"/><use href="#m2" x="713.8" y="343.7"/><use href="#m2" x="714.3" y="343.3"/><use href="#m2" x="714.8" y="342.9"/><use href="#m2" x="715.4" y="342.6"/><use href="#m2" x="715.9" y="342.2"/><use href="#m2" x="716.4" y="341.9"/><use href="#m2" x="716.9" y="341.5"/><use href="#m2" x="717.5" y="341.2"/><use href="#m2" x="718.0" y="340.9"/><use href="#m2" x="718.5" y="340.6"/><use href="#m2" x="719.1" y="340.3"/><use href="#m2" x="719.6" y="340.1"/><use href="#m2" x="720.1" y="339.8"/><use href="#m2" x="720.6" y="339.5"/><use href="#m2" x="721.2" y="339.3"/><use href="#m2" x="721.7" y="339.1"/><use href="#m2" x="722.2" y="338.9"/><use href="#m2" x="722.8" y="338.6"/><use href="#m2" x="723.3" y="338.4"/><use href="#m2" x="723.8" y="338.2"/><use href="#m2" x="724.3" y="338.0"/><use href="#m2" x="724.9" y="337.8"/><use href="#m2" x="725.4" y="337.6"/><use href="#m2" x="725.9" y="337.5"/><use href="#m2" x="726.5" y="337.3"/><use href="#m2" x="727.0" y="337.1"/><use href="#m2" x="727.5" y="336.9"/><use href="#m2" x="728.1" y="336.7"/><use href="#m2" x="728.6" y="336.6"/><use href="#m2" x="729.1" y="336.4"/><use href="#m2" x="729.6" y="336.2"/><use href="#m2" x="730.2" y="336.1"/><use href="#m2" x="730.7" y="335.9"/><use href="#m2" x="731.2" y="335.7"/><use href="#m2" x="731.8" y="335.5"/><use href="#m2" x="732.3" y="335.4"/><use href="#m2" x="732.8" y="335.2"/><use href="#m2" x="733.3" y="335.0"/><use href="#m2" x="733.9" y="334.8"/><use href="#m2" x="734.4" y="334.6"/><use href="#m2" x="734.9" y="334.4"/><use href="#m2" x="735.5" y="334.2"/><use href="#m2" x="736.0" y="334.0"/><use href="#m2" x="736.5" y="333.8"/><use href="#m2" x="737.0" y="333.6"/><use href="#m2" x="737.6" y="333.4"/><use href="#m2" x="738.1" y="333.2"/><use href="#m2" x="738.6" y="333.0"/><use href="#m2" x="739.2" y="332.8"/><use href="#m2" x="739.7" y="332.5"/><use href="#m2" x="740.2" y="332.3"/><use href="#m2" x="740.7" y="332.1"/><use href="#m2" x="741.3" y="331.9"/><use href="#m2" x="741.8" y="331.7"/><use href="#m2" x="742.3" y="331.5"/><use href="#m2" x="742.9" y="331.3"/><use href="#m2" x="743.4" y="331.1"/><use href="#m2" x="743.9" y="330.9"/><use href="#m2" x="744.5" y="330.6"/><use href="#m2" x="745.0" y="330.4"/><use href="#m2" x="745.5" y="330.2"/><use href="#m2" x="746.0" y="330.0"/><use href="#m2" x="746.6" y="329.8"/><use href="#m2" x="747.1" y="329.6"/><use href="#m2" x="747.6" y="329.4"/><use href="#m2" x="748.2" y="329.2"/><use href="#m2" x="748.7" y="329.0"/><use href="#m2" x="749.2" y="328.7"/><use href="#m2" x="749.7" y="328.5"/><use href="#m2" x="750.3" y="328.3"/><use href="#m2" x="750.8" y="328.1"/><use href="#m2" x="751.3" y="327.9"/><use href="#m2" x="751.9" y="327.7"/><use href="#m2" x="752.4" y="327.5"/><use href="#m2" x="752.9" y="327.3"/><use href="#m2" x="753.4" y="327.1"/><use href="#m2" x="754.0" y="326.9"/><use href="#m2" x="754.5" y="326.7"/><use href="#m2" x="755.0" y="326.5"/><use href="#m2" x="755.6" y="326.3"/><use href="#m2" x="756.1" y="326.1"/><use href="#m2" x="756.6" y="325.9"/><use href="#m2" x="757.1" y="325.7"/><use href="#m2" x="757.7" y="325.5"/><use href="#m2" x="758.2" y="325.3"/><use href="#m2" x="758.7" y="325.1"/><use href="#m2" x="759.3" y="324.9"/><use href="#m2" x="759.8" y="324.8"/><use href="#m2" x="760.3" y="324.6"/><use href="#m2" x="760.9" y="324.4"/><use href="#m2" x="761.4" y="324.2"/><use href="#m2" x="761.9" y="324.0"/><use href="#m2" x="762.4" y="323.8"/><use href="#m2" x="763.0" y="323.7"/><use href="#m2" x="763.5" y="323.5"/><use href="#m2" x="764.0" y="323.3"/><use href="#m2" x="764.6" y="323.1"/><use href="#m2" x="765.1" y="322.9"/><use href="#m2" x="765.6" y="322.8"/><use href="#m2" x="766.1" y="322.6"/><use href="#m2" x="766.7" y="322.4"/><use href="#m2" x="767.2" y="322.2"/><use href="#m2" x="767.7" y="322.1"/><use href="#m2" x="768.3" y="321.9"/><use href="#m2" x="768.8" y="321.7"/><use href="#m2" x="769.3" y="321.5"/><use href="#m2" x="769.8" y="321.4"/><use href="#m2" x="770.4" y="321.2"/><use href="#m2" x="770.9" y="321.0"/><use href="#m2" x="771.4" y="320.9"/><use href="#m2" x="772.0" y="320.7"/><use href="#m2" x="772.5" y="320.5"/><use href="#m2" x="773.0" y="320.3"/><use href="#m2" x="773.5" y="320.2"/><use href="#m2" x="774.1" y="320.0"/><use href="#m2" x="774.6" y="319.8"/><use href="#m2" x="775.1" y="319.7"/><use href="#m2" x="775.7" y="319.5"/><use href="#m2" x="776.2" y="319.3"/><use href="#m2" x="776.7" y="319.2"/><use href="#m2" x="777.2" y="319.0"/><use href="#m2" x="777.8" y="318.9"/><use href="#m2" x="778.3" y="318.7"/><use href="#m2" x="778.8" y="318.5"/><use href="#m2" x="779.4" y="318.4"/><use href="#m2" x="779.9" y="318.2"/><use href="#m2" x="780.4" y="318.0"/><use href="#m2" x="781.0" y="317.9"/><use href="#m2" x="781.5" y="317.7"/><use href="#m2" x="782.0" y="317.6"/><use href="#m2" x="782.5" y="317.4"/><use href="#m2" x="783.1" y="317.3"/><use href="#m2" x="783.6" y="317.1"/><use href="#m2" x="784.1" y="316.9"/><use href="#m2" x="784.7" y="316.8"/><use href="#m2" x="785.2" y="316.6"/><use href="#m2" x="785.7" y="316.5"/><use href="#m2" x="786.2" y="316.3"/><use href="#m2" x="786.8" y="316.2"/><use href="#m2" x="787.3" y="316.0"/><use href="#m2" x="787.8" y="315.9"/><use href="#m2" x="788.4" y="315.7"/><use href="#m2" x="788.9" y="315.6"/><use href="#m2" x="789.4" y="315.4"/><use href="#m2" x="789.9" y="315.3"/><use href="#m2" x="790.5" y="315.1"/><use href="#m2" x="791.0" y="315.0"/><use href="#m2" x="791.5" y="314.8"/><use href="#m2" x="792.1" y="314.7"/><use href="#m2" x="792.6" y="314.5"/><use href="#m2" x="793.1" y="314.4"/><use href="#m2" x="793.6" y="314.2"/><use href="#m2" x="794.2" y="314.1"/><use href="#m2" x="794.7" y="313.9"/><use href="#m2" x="795.2" y="313.8"/><use href="#m2" x="795.8" y="313.6"/><use href="#m2" x="796.3" y="313.5"/><use href="#m2" x="796.8" y="313.3"/><use href="#m2" x="797.4" y="313.2"/><use href="#m2" x="797.9" y="313.0"/><use href="#m2" x="798.4" y="312.9"/><use href="#m2" x="798.9" y="312.8"/><use href="#m2" x="799.5" y="312.6"/><use href="#m2" x="800.0" y="312.5"/><use href="#m2" x="800.5" y="312.3"/><use href="#m2" x="801.1" y="312.2"/><use href="#m2" x="801.6" y="312.1"/><use href="#m2" x="802.1" y="311.9"/><use href="#m2" x="802.6" y="311.8"/><use href="#m2" x="803.2" y="311.7"/><use href="#m2" x="803.7" y="311.5"/><use href="#m2" x="804.2" y="311.4"/><use href="#m2" x="804.8" y="311.3"/><use href="#m2" x="805.3" y="311.1"/><use href="#m2" x="805.8" y="311.0"/><use href="#m2" x="806.3" y="310.9"/><use href="#m2" x="806.9" y="310.7"/><use href="#m2" x="807.4" y="310.6"/><use href="#m2" x="807.9" y="310.5"/><use href="#m2" x="808.5" y="310.4"/><use href="#m2" x="809.0" y="310.2"/><use href="#m2" x="809.5" y="310.1"/><use href="#m2" x="810.0" y="310.0"/><use href="#m2" x="810.6" y="309.9"/><use href="#m2" x="811.1" y="309.8"/><use href="#m2" x="811.6" y="309.7"/><use href="#m2" x="812.2" y="309.6"/><use href="#m2" x="812.7" y="309.4"/><use href="#m2" x="813.2" y="309.3"/><use href="#m2" x="813.8" y="309.2"/><use href="#m2" x="814.3" y="309.1"/><use href="#m2" x="814.8" y="309.0"/><use href="#m2" x="815.3" y="308.9"/><use href="#m2" x="815.9" y="308.8"/><use href="#m2" x="816.4" y="308.7"/><use href="#m2" x="816.9" y="308.6"/><use href="#m2" x="817.5" y="308.5"/><use href="#m2" x="818.0" y="308.4"/><use href="#m2" x="818.5" y="308.3"/><use href="#m2" x="819.0" y="308.2"/><use href="#m2" x="819.6" y="308.1"/><use href="#m2" x="820.1" y="308.0"/><use href="#m2" x="820.6" y="307.9"/><use href="#m2" x="821.2" y="307.8"/><use href="#m2" x="821.7" y="307.8"/><use href="#m2" x="822.2" y="307.7"/><use href="#m2" x="822.7" y="307.6"/><use href="#m2" x="823.3" y="307.5"/><use href="#m2" x="823.8" y="307.4"/><use href="#m2" x="824.3" y="307.3"/><use href="#m2" x="824.9" y="307.2"/><use href="#m2" x="825.4" y="307.1"/><use href="#m2" x="825.9" y="307.0"/><use href="#m2" x="826.4" y="306.9"/><use href="#m2" x="827.0" y="306.8"/><use href="#m2" x="827.5" y="306.7"/><use href="#m2" x="828.0" y="306.6"/><use href="#m2" x="828.6" y="306.6"/><use href="#m2" x="829.1" y="306.5"/><use href="#m2" x="829.6" y="306.4"/><use href="#m2" x="830.1" y="306.3"/><use href="#m2" x="830.7" y="306.2"/><use href="#m2" x="831.2" y="306.1"/><use href="#m2" x="831.7" y="306.0"/><use href="#m2" x="832.3" y="305.9"/><use href="#m2" x="832.8" y="305.8"/><use href="#m2" x="833.3" y="305.7"/><use href="#m2" x="833.9" y="305.6"/><use href="#m2" x="834.4" y="305.5"/><use href="#m2" x="834.9" y="305.4"/><use href="#m2" x="835.4" y="305.3"/><use href="#m2" x="836.0" y="305.2"/><use href="#m2" x="836.5" y="305.1"/><use href="#m2" x="837.0" y="305.0"/><use href="#m2" x="837.6" y="304.8"/><use href="#m2" x="838.1" y="304.7"/><use href="#m2" x="838.6" y="304.6"/><use href="#m2" x="839.1" y="304.5"/><use href="#m2" x="839.7" y="304.4"/><use href="#m2" x="840.2" y="304.3"/><use href="#m2" x="840.7" y="304.2"/><use href="#m2" x="841.3" y="304.0"/><use href="#m2" x="841.8" y="303.9"/><use href="#m2" x="842.3" y="303.8"/><use href="#m2" x="842.8" y="303.6"/><use href="#m2" x="843.4" y="303.5"/><use href="#m2" x="843.9" y="303.4"/><use href="#m2" x="844.4" y="303.2"/><use href="#m2" x="845.0" y="303.1"/><use href="#m2" x="845.5" y="303.0"/><use href="#m2" x="846.0" y="302.8"/><use href="#m2" x="846.5" y="302.7"/><use href="#m2" x="847.1" y="302.5"/><use href="#m2" x="847.6" y="302.4"/><use href="#m2" x="848.1" y="302.2"/><use href="#m2" x="848.7" y="302.1"/><use href="#m2" x="849.2" y="301.9"/><use href="#m2" x="849.7" y="301.8"/><use href="#m2" x="850.3" y="301.6"/><use href="#m2" x="850.8" y="301.5"/><use href="#m2" x="851.3" y="301.3"/><use href="#m2" x="851.8" y="301.2"/><use href="#m2" x="852.4" y="301.0"/><use href="#m2" x="852.9" y="300.9"/><use href="#m2" x="853.4" y="300.7"/><use href="#m2" x="854.0" y="300.6"/><use href="#m2" x="854.5" y="300.4"/><use href="#m2" x="855.0" y="300.2"/><use href="#m2" x="855.5" y="300.1"/><use href="#m2" x="856.1" y="299.9"/><use href="#m2" x="856.6" y="299.8"/><use href="#m2" x="857.1" y="299.6"/><use href="#m2" x="857.7" y="299.5"/><use href="#m2" x="858.2" y="299.3"/><use href="#m2" x="858.7" y="299.2"/><use href="#m2" x="859.2" y="299.0"/><use href="#m2" x="859.8" y="298.9"/><use href="#m2" x="860.3" y="298.7"/><use href="#m2" x="860.8" y="298.6"/><use href="#m2" x="861.4" y="298.4"/><use href="#m2" x="861.9" y="298.3"/><use href="#m2" x="862.4" y="298.1"/><use href="#m2" x="862.9" y="298.0"/><use href="#m2" x="863.5" y="297.9"/><use href="#m2" x="864.0" y="297.7"/><use href="#m2" x="864.5" y="297.6"/><use href="#m2" x="865.1" y="297.4"/><use href="#m2" x="865.6" y="297.3"/><use href="#m2" x="866.1" y="297.2"/><use href="#m2" x="866.6" y="297.0"/><use href="#m2" x="867.2" y="296.9"/><use href="#m2" x="867.7" y="296.8"/><use href="#m2" x="868.2" y="296.6"/><use href="#m2" x="868.8" y="296.5"/><use href="#m2" x="869.3" y="296.4"/><use href="#m2" x="869.8" y="296.3"/><use href="#m2" x="870.4" y="296.1"/><use href="#m2" x="870.9" y="296.0"/><use href="#m2" x="871.4" y="295.9"/><use href="#m2" x="871.9" y="295.7"/><use href="#m2" x="872.5" y="295.6"/><use href="#m2" x="873.0" y="295.5"/><use href="#m2" x="873.5" y="295.4"/><use href="#m2" x="874.1" y="295.2"/><use href="#m2" x="874.6" y="295.1"/><use href="#m2" x="875.1" y="295.0"/><use href="#m2" x="875.6" y="294.9"/><use href="#m2" x="876.2" y="294.7"/><use href="#m2" x="876.7" y="294.6"/><use href="#m2" x="877.2" y="294.5"/><use href="#m2" x="877.8" y="294.4"/><use href="#m2" x="878.3" y="294.2"/><use href="#m2" x="878.8" y="294.1"/><use href="#m2" x="879.3" y="294.0"/><use href="#m2" x="879.9" y="293.9"/><use href="#m2" x="880.4" y="293.7"/><use href="#m2" x="880.9" y="293.6"/><use href="#m2" x="881.5" y="293.5"/><use href="#m2" x="882.0" y="293.4"/><use href="#m2" x="882.5" y="293.2"/><use href="#m2" x="883.0" y="293.1"/><use href="#m2" x="883.6" y="293.0"/><use href="#m2" x="884.1" y="292.9"/><use href="#m2" x="884.6" y="292.8"/><use href="#m2" x="885.2" y="292.6"/><use href="#m2" x="885.7" y="292.5"/><use href="#m2" x="886.2" y="292.4"/><use href="#m2" x="886.8" y="292.3"/><use href="#m2" x="887.3" y="292.2"/><use href="#m2" x="887.8" y="292.1"/><use href="#m2" x="888.3" y="291.9"/><use href="#m2" x="888.9" y="291.8"/><use href="#m2" x="889.4" y="291.7"/><use href="#m2" x="889.9" y="291.6"/><use href="#m2" x="890.5" y="291.5"/><use href="#m2" x="891.0" y="291.4"/><use href="#m2" x="891.5" y="291.2"/><use href="#m2" x="892.0" y="291.1"/><use href="#m2" x="892.6" y="291.0"/><use href="#m2" x="893.1" y="290.9"/><use href="#m2" x="893.6" y="290.8"/><use href="#m2" x="894.2" y="290.7"/><use href="#m2" x="894.7" y="290.5"/><use href="#m2" x="895.2" y="290.4"/><use href="#m2" x="895.7" y="290.3"/><use href="#m2" x="896.3" y="290.2"/><use href="#m2" x="896.8" y="290.1"/><use href="#m2" x="897.3" y="290.0"/><use href="#m2" x="897.9" y="289.9"/><use href="#m2" x="898.4" y="289.8"/><use href="#m2" x="898.9" y="289.6"/><use href="#m2" x="899.4" y="289.5"/><use href="#m2" x="900.0" y="289.4"/><use href="#m2" x="900.5" y="289.3"/><use href="#m2" x="901.0" y="289.2"/><use href="#m2" x="901.6" y="289.1"/><use href="#m2" x="902.1" y="289.0"/><use href="#m2" x="902.6" y="288.9"/><use href="#m2" x="903.2" y="288.8"/><use href="#m2" x="903.7" y="288.7"/><use href="#m2" x="904.2" y="288.6"/><use href="#m2" x="904.7" y="288.4"/><use href="#m2" x="905.3" y="288.3"/><use href="#m2" x="905.8" y="288.2"/><use href="#m2" x="906.3" y="288.1"/><use href="#m2" x="906.9" y="288.0"/><use href="#m2" x="907.4" y="287.9"/><use href="#m2" x="907.9" y="287.8"/><use href="#m2" x="908.4" y="287.7"/><use href="#m2" x="909.0" y="287.6"/><use href="#m2" x="909.5" y="287.5"/><use href="#m2" x="910.0" y="287.4"/><use href="#m2" x="910.6" y="287.3"/><use href="#m2" x="911.1" y="287.2"/><use href="#m2" x="911.6" y="287.1"/><use href="#m2" x="912.1" y="287.0"/><use href="#m2" x="912.7" y="286.9"/><use href="#m2" x="913.2" y="286.7"/><use href="#m2" x="913.7" y="286.6"/><use href="#m2" x="914.3" y="286.5"/><use href="#m2" x="914.8" y="286.4"/><use href="#m2" x="915.3" y="286.3"/><use href="#m2" x="915.8" y="286.2"/><use href="#m2" x="916.4" y="286.1"/><use href="#m2" x="916.9" y="286.0"/><use href="#m2" x="917.4" y="285.9"/><use href="#m2" x="918.0" y="285.8"/><use href="#m2" x="918.5" y="285.7"/><use href="#m2" x="919.0" y="285.6"/><use href="#m2" x="919.5" y="285.5"/><use href="#m2" x="920.1" y="285.4"/><use href="#m2" x="920.6" y="285.3"/><use href="#m2" x="921.1" y="285.2"/><use href="#m2" x="921.7" y="285.1"/><use href="#m2" x="922.2" y="285.0"/><use href="#m2" x="922.7" y="284.9"/><use href="#m2" x="923.3" y="284.8"/><use href="#m2" x="923.8" y="284.7"/><use href="#m2" x="924.3" y="284.6"/><use href="#m2" x="924.8" y="284.5"/><use href="#m2" x="925.4" y="284.4"/><use href="#m2" x="925.9" y="284.3"/><use href="#m2" x="926.4" y="284.2"/><use href="#m2" x="927.0" y="284.1"/><use href="#m2" x="927.5" y="284.0"/><use href="#m2" x="928.0" y="283.9"/><use href="#m2" x="928.5" y="283.8"/><use href="#m2" x="929.1" y="283.7"/><use href="#m2" x="929.6" y="283.7"/><use href="#m2" x="930.1" y="283.6"/><use href="#m2" x="930.7" y="283.5"/><use href="#m2" x="931.2" y="283.4"/><use href="#m2" x="931.7" y="283.3"/><use href="#m2" x="932.2" y="283.2"/><use href="#m2" x="932.8" y="283.1"/><use href="#m2" x="933.3" y="283.0"/><use href="#m2" x="933.8" y="283.0"/><use href="#m2" x="934.4" y="282.9"/><use href="#m2" x="934.9" y="282.8"/><use href="#m2" x="935.4" y="282.7"/><use href="#m2" x="935.9" y="282.6"/><use href="#m2" x="936.5" y="282.5"/><use href="#m2" x="937.0" y="282.4"/><use href="#m2" x="937.5" y="282.3"/><use href="#m2" x="938.1" y="282.2"/><use href="#m2" x="938.6" y="282.1"/><use href="#m2" x="939.1" y="282.0"/><use href="#m2" x="939.7" y="281.9"/><use href="#m2" x="940.2" y="281.8"/><use href="#m2" x="940.7" y="281.7"/><use href="#m2" x="941.2" y="281.6"/><use href="#m2" x="941.8" y="281.5"/><use href="#m2" x="942.3" y="281.4"/><use href="#m2" x="942.8" y="281.3"/><use href="#m2" x="943.4" y="281.1"/><use href="#m2" x="943.9" y="281.0"/><use href="#m2" x="944.4" y="280.9"/><use href="#m2" x="944.9" y="280.8"/><use href="#m2" x="945.5" y="280.6"/><use href="#m2" x="946.0" y="280.5"/><use href="#m2" x="946.5" y="280.4"/><use href="#m2" x="947.1" y="280.2"/><use href="#m2" x="947.6" y="280.1"/><use href="#m2" x="948.1" y="279.9"/><use href="#m2" x="948.6" y="279.7"/><use href="#m2" x="949.2" y="279.6"/><use href="#m2" x="949.7" y="279.4"/><use href="#m2" x="950.2" y="279.2"/><use href="#m2" x="950.8" y="279.0"/><use href="#m2" x="951.3" y="278.8"/><use href="#m2" x="951.8" y="278.6"/><use href="#m2" x="952.3" y="278.4"/><use href="#m2" x="952.9" y="278.2"/><use href="#m2" x="953.4" y="278.0"/><use href="#m2" x="953.9" y="277.8"/><use href="#m2" x="954.5" y="277.6"/><use href="#m2" x="955.0" y="277.4"/><use href="#m2" x="955.5" y="277.2"/><use href="#m2" x="956.1" y="276.9"/><use href="#m2" x="956.6" y="276.7"/><use href="#m2" x="957.1" y="276.5"/><use href="#m2" x="957.6" y="276.3"/><use href="#m2" x="958.2" y="276.1"/><use href="#m2" x="958.7" y="275.9"/><use href="#m2" x="959.2" y="275.6"/><use href="#m2" x="959.8" y="275.4"/><use href="#m2" x="960.3" y="275.2"/><use href="#m2" x="960.8" y="275.0"/><use href="#m2" x="961.3" y="274.8"/><use href="#m2" x="961.9" y="274.6"/><use href="#m2" x="962.4" y="274.4"/><use href="#m2" x="962.9" y="274.2"/><use href="#m2" x="963.5" y="274.0"/><use href="#m2" x="964.0" y="273.8"/><use href="#m2" x="964.5" y="273.6"/><use href="#m2" x="965.0" y="273.4"/><use href="#m2" x="965.6" y="273.2"/><use href="#m2" x="966.1" y="273.1"/><use href="#m2" x="966.6" y="272.9"/><use href="#m2" x="967.2" y="272.7"/><use href="#m2" x="967.7" y="272.5"/><use href="#m2" x="968.2" y="272.3"/><use href="#m2" x="968.7" y="272.2"/><use href="#m2" x="969.3" y="272.0"/><use href="#m2" x="969.8" y="271.8"/><use href="#m2" x="970.3" y="271.7"/><use href="#m2" x="970.9" y="271.5"/><use href="#m2" x="971.4" y="271.3"/><use href="#m2" x="971.9" y="271.1"/><use href="#m2" x="972.5" y="271.0"/><use href="#m2" x="973.0" y="270.8"/><use href="#m2" x="973.5" y="270.6"/><use href="#m2" x="974.0" y="270.5"/><use href="#m2" x="974.6" y="270.3"/><use href="#m2" x="975.1" y="270.1"/><use href="#m2" x="975.6" y="270.0"/><use href="#m2" x="976.2" y="269.8"/><use href="#m2" x="976.7" y="269.7"/><use href="#m2" x="977.2" y="269.5"/><use href="#m2" x="977.7" y="269.3"/><use href="#m2" x="978.3" y="269.2"/><use href="#m2" x="978.8" y="269.0"/><use href="#m2" x="979.3" y="268.9"/><use href="#m2" x="979.9" y="268.7"/><use href="#m2" x="980.4" y="268.5"/><use href="#m2" x="980.9" y="268.4"/><use href="#m2" x="981.4" y="268.2"/><use href="#m2" x="982.0" y="268.1"/><use href="#m2" x="982.5" y="267.9"/><use href="#m2" x="983.0" y="267.7"/><use href="#m2" x="983.6" y="267.6"/><use href="#m2" x="984.1" y="267.4"/><use href="#m2" x="984.6" y="267.3"/><use href="#m2" x="985.1" y="267.1"/><use href="#m2" x="985.7" y="266.9"/><use href="#m2" x="986.2" y="266.8"/><use href="#m2" x="986.7" y="266.6"/><use href="#m2" x="987.3" y="266.5"/><use href="#m2" x="987.8" y="266.3"/><use href="#m2" x="988.3" y="266.2"/><use href="#m2" x="988.8" y="266.0"/><use href="#m2" x="989.4" y="265.9"/><use href="#m2" x="989.9" y="265.7"/><use href="#m2" x="990.4" y="265.5"/><use href="#m2" x="991.0" y="265.4"/><use href="#m2" x="991.5" y="265.2"/><use href="#m2" x="992.0" y="265.1"/><use href="#m2" x="992.6" y="264.9"/><use href="#m2" x="993.1" y="264.8"/><use href="#m2" x="993.6" y="264.6"/><use href="#m2" x="994.1" y="264.4"/><use href="#m2" x="994.7" y="264.3"/><use href="#m2" x="995.2" y="264.1"/><use href="#m2" x="995.7" y="264.0"/><use href="#m2" x="996.3" y="263.8"/><use href="#m2" x="996.8" y="263.7"/><use href="#m2" x="997.3" y="263.5"/><use href="#m2" x="997.8" y="263.3"/><use href="#m2" x="998.4" y="263.2"/><use href="#m2" x="998.9" y="263.0"/><use href="#m2" x="999.4" y="262.9"/><use href="#m2" x="1000.0" y="262.7"/><use href="#m2" x="1000.5" y="262.6"/><use href="#m2" x="1001.0" y="262.4"/><use href="#m2" x="1001.5" y="262.2"/><use href="#m2" x="1002.1" y="262.1"/><use href="#m2" x="1002.6" y="261.9"/><use href="#m2" x="1003.1" y="261.8"/><use href="#m2" x="1003.7" y="261.6"/><use href="#m2" x="1004.2" y="261.5"/><use href="#m2" x="1004.7" y="261.3"/><use href="#m2" x="1005.2" y="261.2"/><use href="#m2" x="1005.8" y="261.0"/><use href="#m2" x="1006.3" y="260.9"/><use href="#m2" x="1006.8" y="260.7"/><use href="#m2" x="1007.4" y="260.6"/><use href="#m2" x="1007.9" y="260.4"/><use href="#m2" x="1008.4" y="260.3"/><use href="#m2" x="1009.0" y="260.1"/><use href="#m2" x="1009.5" y="259.9"/><use href="#m2" x="1010.0" y="259.8"/><use href="#m2" x="1010.5" y="259.6"/><use href="#m2" x="1011.1" y="259.5"/><use href="#m2" x="1011.6" y="259.3"/><use href="#m2" x="1012.1" y="259.2"/><use href="#m2" x="1012.7" y="259.0"/><use href="#m2" x="1013.2" y="258.9"/><use href="#m2" x="1013.7" y="258.7"/><use href="#m2" x="1014.2" y="258.6"/><use href="#m2" x="1014.8" y="258.4"/><use href="#m2" x="1015.3" y="258.3"/><use href="#m2" x="1015.8" y="258.1"/><use href="#m2" x="1016.4" y="258.0"/><use href="#m2" x="1016.9" y="257.8"/><use href="#m2" x="1017.4" y="257.7"/><use href="#m2" x="1017.9" y="257.5"/><use href="#m2" x="1018.5" y="257.4"/><use href="#m2" x="1019.0" y="257.2"/><use href="#m2" x="1019.5" y="257.0"/><use href="#m2" x="1020.1" y="256.9"/><use href="#m2" x="1020.6" y="256.7"/><use href="#m2" x="1021.1" y="256.6"/><use href="#m2" x="1021.6" y="256.4"/><use href="#m2" x="1022.2" y="256.3"/><use href="#m2" x="1022.7" y="256.1"/><use href="#m2" x="1023.2" y="255.9"/><use href="#m2" x="1023.8" y="255.8"/><use href="#m2" x="1024.3" y="255.6"/><use href="#m2" x="1024.8" y="255.5"/><use href="#m2" x="1025.3" y="255.3"/><use href="#m2" x="1025.9" y="255.1"/><use href="#m2" x="1026.4" y="255.0"/><use href="#m2" x="1026.9" y="254.8"/><use href="#m2" x="1027.5" y="254.6"/><use href="#m2" x="1028.0" y="254.5"/><use href="#m2" x="1028.5" y="254.3"/><use href="#m2" x="1029.1" y="254.1"/><use href="#m2" x="1029.6" y="253.9"/><use href="#m2" x="1030.1" y="253.8"/><use href="#m2" x="1030.6" y="253.6"/><use href="#m2" x="1031.2" y="253.4"/><use href="#m2" x="1031.7" y="253.3"/><use href="#m2" x="1032.2" y="253.1"/><use href="#m2" x="1032.8" y="252.9"/><use href="#m2" x="1033.3" y="252.7"/><use href="#m2" x="1033.8" y="252.6"/><use href="#m2" x="1034.3" y="252.4"/><use href="#m2" x="1034.9" y="252.2"/><use href="#m2" x="1035.4" y="252.0"/><use href="#m2" x="1035.9" y="251.8"/><use href="#m2" x="1036.5" y="251.7"/><use href="#m2" x="1037.0" y="251.5"/><use href="#m2" x="1037.5" y="251.3"/><use href="#m2" x="1038.0" y="251.1"/><use href="#m2" x="1038.6" y="250.9"/><use href="#m2" x="1039.1" y="250.8"/><use href="#m2" x="1039.6" y="250.6"/><use href="#m2" x="1040.2" y="250.4"/><use href="#m2" x="1040.7" y="250.2"/><use href="#m2" x="1041.2" y="250.0"/><use href="#m2" x="1041.7" y="249.8"/><use href="#m2" x="1042.3" y="249.6"/><use href="#m2" x="1042.8" y="249.4"/><use href="#m2" x="1043.3" y="249.3"/><use href="#m2" x="1043.9" y="249.1"/><use href="#m2" x="1044.4" y="248.9"/><use href="#m2" x="1044.9" y="248.7"/><use href="#m2" x="1045.5" y="248.5"/><use href="#m2" x="1046.0" y="248.3"/><use href="#m2" x="1046.5" y="248.1"/><use href="#m2" x="1047.0" y="247.9"/><use href="#m2" x="1047.6" y="247.7"/><use href="#m2" x="1048.1" y="247.5"/><use href="#m2" x="1048.6" y="247.3"/><use href="#m2" x="1049.2" y="247.1"/><use href="#m2" x="1049.7" y="246.9"/><use href="#m2" x="1050.2" y="246.7"/><use href="#m2" x="1050.7" y="246.5"/><use href="#m2" x="1051.3" y="246.3"/><use href="#m2" x="1051.8" y="246.1"/><use href="#m2" x="1052.3" y="245.9"/><use href="#m2" x="1052.9" y="245.7"/><use href="#m2" x="1053.4" y="245.5"/><use href="#m2" x="1053.9" y="245.3"/><use href="#m2" x="1054.4" y="245.1"/><use href="#m2" x="1055.0" y="244.9"/><use href="#m2" x="1055.5" y="244.7"/><use href="#m2" x="1056.0" y="244.4"/><use href="#m2" x="1056.6" y="244.2"/><use href="#m2" x="1057.1" y="244.0"/><use href="#m2" x="1057.6" y="243.8"/><use href="#m2" x="1058.1" y="243.6"/><use href="#m2" x="1058.7" y="243.4"/><use href="#m2" x="1059.2" y="243.2"/><use href="#m2" x="1059.7" y="243.0"/><use href="#m2" x="1060.3" y="242.8"/><use href="#m2" x="1060.8" y="242.6"/><use href="#m2" x="1061.3" y="242.3"/><use href="#m2" x="1061.9" y="242.1"/><use href="#m2" x="1062.4" y="241.9"/><use href="#m2" x="1062.9" y="241.7"/><use href="#m2" x="1063.4" y="241.5"/><use href="#m2" x="1064.0" y="241.2"/><use href="#m2" x="1064.5" y="241.0"/><use href="#m2" x="1065.0" y="240.8"/><use href="#m2" x="1065.6" y="240.6"/><use href="#m2" x="1066.1" y="240.4"/><use href="#m2" x="1066.6" y="240.1"/><use href="#m2" x="1067.1" y="239.9"/><use href="#m2" x="1067.7" y="239.7"/><use href="#m2" x="1068.2" y="239.4"/><use href="#m2" x="1068.7" y="239.2"/><use href="#m2" x="1069.3" y="239.0"/><use href="#m2" x="1069.8" y="238.7"/><use href="#m2" x="1070.3" y="238.5"/><use href="#m2" x="1070.8" y="238.3"/><use href="#m2" x="1071.4" y="238.0"/><use href="#m2" x="1071.9" y="237.8"/><use href="#m2" x="1072.4" y="237.5"/><use href="#m2" x="1073.0" y="237.3"/><use href="#m2" x="1073.5" y="237.0"/><use href="#m2" x="1074.0" y="236.8"/><use href="#m2" x="1074.5" y="236.5"/><use href="#m2" x="1075.1" y="236.2"/><use href="#m2" x="1075.6" y="236.0"/><use href="#m2" x="1076.1" y="235.7"/><use href="#m2" x="1076.7" y="235.4"/><use href="#m2" x="1077.2" y="235.2"/><use href="#m2" x="1077.7" y="234.9"/><use href="#m2" x="1078.2" y="234.6"/><use href="#m2" x="1078.8" y="234.4"/><use href="#m2" x="1079.3" y="234.1"/><use href="#m2" x="1079.8" y="233.8"/><use href="#m2" x="1080.4" y="233.5"/><use href="#m2" x="1080.9" y="233.2"/><use href="#m2" x="1081.4" y="232.9"/><use href="#m2" x="1082.0" y="232.6"/><use href="#m2" x="1082.5" y="232.3"/><use href="#m2" x="1083.0" y="232.0"/><use href="#m2" x="1083.5" y="231.7"/><use href="#m2" x="1084.1" y="231.3"/><use href="#m2" x="1084.6" y="231.0"/><use href="#m2" x="1085.1" y="230.7"/><use href="#m2" x="1085.7" y="230.3"/><use href="#m2" x="1086.2" y="230.0"/><use href="#m2" x="1086.7" y="229.7"/><use href="#m2" x="1087.2" y="229.3"/><use href="#m2" x="1087.8" y="228.9"/><use href="#m2" x="1088.3" y="228.6"/><use href="#m2" x="1088.8" y="228.2"/><use href="#m2" x="1089.4" y="227.8"/><use href="#m2" x="1089.9" y="227.5"/><use href="#m2" x="1090.4" y="227.1"/><use href="#m2" x="1090.9" y="226.7"/><use href="#m2" x="1091.5" y="226.3"/><use href="#m2" x="1092.0" y="225.9"/><use href="#m2" x="1092.5" y="225.5"/><use href="#m2" x="1093.1" y="225.1"/><use href="#m2" x="1093.6" y="224.7"/><use href="#m2" x="1094.1" y="224.4"/><use href="#m2" x="1094.6" y="224.0"/><use href="#m2" x="1095.2" y="223.7"/><use href="#m2" x="1095.7" y="223.3"/><use href="#m2" x="1096.2" y="223.0"/><use href="#m2" x="1096.8" y="222.6"/><use href="#m2" x="1097.3" y="222.3"/><use href="#m2" x="1097.8" y="221.9"/><use href="#m2" x="1098.4" y="221.5"/><use href="#m2" x="1098.9" y="221.0"/><use href="#m2" x="1099.4" y="220.6"/><use href="#m2" x="1099.9" y="220.1"/><use href="#m2" x="1100.5" y="219.6"/><use href="#m2" x="1101.0" y="219.0"/><use href="#m2" x="1101.5" y="218.5"/><use href="#m2" x="1102.1" y="217.8"/><use href="#m2" x="1102.6" y="217.1"/><use href="#m2" x="1103.1" y="216.4"/><use href="#m2" x="1103.6" y="215.6"/><use href="#m2" x="1104.2" y="214.8"/><use href="#m2" x="1104.7" y="213.9"/><use href="#m2" x="1105.2" y="212.3"/><use href="#m2" x="1105.8" y="210.1"/><use href="#m2" x="1106.3" y="207.6"/><use href="#m2" x="1106.8" y="205.7"/><use href="#m2" x="1107.3" y="204.2"/><use href="#m2" x="1107.9" y="203.0"/><use href="#m2" x="1108.4" y="201.8"/><use href="#m2" x="1108.9" y="200.8"/><use href="#m2" x="1109.5" y="199.7"/><use href="#m2" x="1110.0" y="198.7"/><use href="#m2" x="1110.5" y="197.6"/><use href="#m2" x="1111.0" y="196.4"/><use href="#m2" x="1111.6" y="195.1"/><use href="#m2" x="1112.1" y="193.9"/><use href="#m2" x="1112.6" y="192.6"/><use href="#m2" x="1113.2" y="191.3"/><use href="#m2" x="1113.7" y="189.8"/><use href="#m2" x="1114.2" y="188.2"/><use href="#m2" x="1114.8" y="186.6"/><use href="#m2" x="1115.3" y="184.6"/><use href="#m2" x="1115.8" y="181.6"/><use href="#m2" x="1116.3" y="174.0"/><use href="#m2" x="1116.9" y="166.3"/><use href="#m2" x="1117.4" y="159.2"/></g><path d="M681.6 169.6H1117.5" stroke="#ff1010" stroke-width="1.4" stroke-dasharray="10 6.02"/><path d="M681.6 412.4H1117" stroke="#ff1010" stroke-width="1.4" stroke-dasharray="10 6.02"/><path d="M660.0 143.0V513.5H1139.0M681.5 513.5V509.5M734.4 513.5V509.5M787.3 513.5V509.5M840.2 513.5V509.5M893.1 513.5V509.5M946.0 513.5V509.5M998.9 513.5V509.5M1051.8 513.5V509.5M1104.7 513.5V509.5M660.0 503.4H664.0M660.0 448.8H664.0M660.0 394.1H664.0M660.0 339.5H664.0M660.0 284.9H664.0M660.0 230.2H664.0M660.0 175.6H664.0" stroke="#4a4a4a" stroke-width="1.5" fill="none"/><text x="681.5" y="533.7" text-anchor="middle" font-size="12.8">0</text><text x="734.4" y="533.7" text-anchor="middle" font-size="12.8">100</text><text x="787.3" y="533.7" text-anchor="middle" font-size="12.8">200</text><text x="840.2" y="533.7" text-anchor="middle" font-size="12.8">300</text><text x="893.1" y="533.7" text-anchor="middle" font-size="12.8">400</text><text x="946.0" y="533.7" text-anchor="middle" font-size="12.8">500</text><text x="998.9" y="533.7" text-anchor="middle" font-size="12.8">600</text><text x="1051.8" y="533.7" text-anchor="middle" font-size="12.8">700</text><text x="1104.7" y="533.7" text-anchor="middle" font-size="12.8">800</text><text x="653.0" y="508.9" text-anchor="end" font-size="12.8">0</text><text x="653.0" y="454.3" text-anchor="end" font-size="12.8">0.1</text><text x="653.0" y="399.6" text-anchor="end" font-size="12.8">0.2</text><text x="653.0" y="345.0" text-anchor="end" font-size="12.8">0.3</text><text x="653.0" y="290.4" text-anchor="end" font-size="12.8">0.4</text><text x="653.0" y="235.8" text-anchor="end" font-size="12.8">0.5</text><text x="653.0" y="181.1" text-anchor="end" font-size="12.8">0.6</text><text x="899.5" y="553.8" text-anchor="middle" font-size="14.7">Sort Index</text><text transform="translate(626.5 328.2) rotate(-90)" text-anchor="middle" font-size="14.7">Dist to Nearest Point</text><rect x="81.0" y="610.0" width="479.0" height="370.0" fill="#fff"/><path d="M102.7 610.0V980.0M146.3 610.0V980.0M189.9 610.0V980.0M233.5 610.0V980.0M277.1 610.0V980.0M320.7 610.0V980.0M364.3 610.0V980.0M407.9 610.0V980.0M451.5 610.0V980.0M495.1 610.0V980.0M538.7 610.0V980.0M81.0 963.2H560.0M81.0 929.5H560.0M81.0 895.8H560.0M81.0 862.2H560.0M81.0 828.5H560.0M81.0 794.8H560.0M81.0 761.1H560.0M81.0 727.4H560.0M81.0 693.8H560.0M81.0 660.1H560.0M81.0 626.4H560.0" stroke="#dedede" stroke-width="1" fill="none"/><use href="#m" x="102.7" y="963.2"/><use href="#m" x="538.7" y="626.4"/><path d="M81.0 610.0V980.0H560.0M102.7 980.0V976.0M146.3 980.0V976.0M189.9 980.0V976.0M233.5 980.0V976.0M277.1 980.0V976.0M320.7 980.0V976.0M364.3 980.0V976.0M407.9 980.0V976.0M451.5 980.0V976.0M495.1 980.0V976.0M538.7 980.0V976.0M81.0 963.2H85.0M81.0 929.5H85.0M81.0 895.8H85.0M81.0 862.2H85.0M81.0 828.5H85.0M81.0 794.8H85.0M81.0 761.1H85.0M81.0 727.4H85.0M81.0 693.8H85.0M81.0 660.1H85.0M81.0 626.4H85.0" stroke="#4a4a4a" stroke-width="1.5" fill="none"/><text x="102.7" y="1000.2" text-anchor="middle" font-size="12.8">1</text><text x="146.3" y="1000.2" text-anchor="middle" font-size="12.8">1.1</text><text x="189.9" y="1000.2" text-anchor="middle" font-size="12.8">1.2</text><text x="233.5" y="1000.2" text-anchor="middle" font-size="12.8">1.3</text><text x="277.1" y="1000.2" text-anchor="middle" font-size="12.8">1.4</text><text x="320.7" y="1000.2" text-anchor="middle" font-size="12.8">1.5</text><text x="364.3" y="1000.2" text-anchor="middle" font-size="12.8">1.6</text><text x="407.9" y="1000.2" text-anchor="middle" font-size="12.8">1.7</text><text x="451.5" y="1000.2" text-anchor="middle" font-size="12.8">1.8</text><text x="495.1" y="1000.2" text-anchor="middle" font-size="12.8">1.9</text><text x="538.7" y="1000.2" text-anchor="middle" font-size="12.8">2</text><text x="74.0" y="968.7" text-anchor="end" font-size="12.8">1</text><text x="74.0" y="935.0" text-anchor="end" font-size="12.8">1.1</text><text x="74.0" y="901.3" text-anchor="end" font-size="12.8">1.2</text><text x="74.0" y="867.7" text-anchor="end" font-size="12.8">1.3</text><text x="74.0" y="834.0" text-anchor="end" font-size="12.8">1.4</text><text x="74.0" y="800.3" text-anchor="end" font-size="12.8">1.5</text><text x="74.0" y="766.6" text-anchor="end" font-size="12.8">1.6</text><text x="74.0" y="732.9" text-anchor="end" font-size="12.8">1.7</text><text x="74.0" y="699.3" text-anchor="end" font-size="12.8">1.8</text><text x="74.0" y="665.6" text-anchor="end" font-size="12.8">1.9</text><text x="74.0" y="631.9" text-anchor="end" font-size="12.8">2</text><text x="320.5" y="1020.0" text-anchor="middle" font-size="14.7">Repetition Group No.</text><text transform="translate(46.5 795.0) rotate(-90)" text-anchor="middle" font-size="14.7">Repetition Group No.</text><text x="660" y="627.0" font-size="16.6" fill="#000">Explanation of Diagram:</text><text x="660" y="648.0" font-size="16.6" fill="#000">The two upper plots show normalized (0..1) euclidian</text><text x="660" y="669.0" font-size="16.6" fill="#000">distances of measurement points to the nearest</text><text x="660" y="690.0" font-size="16.6" fill="#000">neighbour in the input space. If most points are</text><text x="660" y="711.0" font-size="16.6" fill="#000">between the red dashed lines (median +/- 3 Sigma),</text><text x="660" y="732.0" font-size="16.6" fill="#000">a good space-filling distribution is given.</text><text x="660" y="753.0" font-size="16.6" fill="#000">The lower left plot can be used to mark found</text><text x="660" y="774.0" font-size="16.6" fill="#000">repetition point groups. The tolerance threshold</text><text x="660" y="795.0" font-size="16.6" fill="#000">can be changed in the menu.</text></svg><div id="sb"></div>
<div id="thumb"></div>
<svg style="position:absolute;left:1158px;top:103px" width="21" height="920" viewBox="0 0 21 920">
<path d="M5.3 13.6L9.6 9.2L13.9 13.6" fill="none" stroke="#555" stroke-width="2"/>
<path d="M5.3 907.4L9.6 911.8L13.9 907.4" fill="none" stroke="#555" stroke-width="2"/>
</svg>
<div class="bl"></div><div class="br"></div><div class="bb"></div><div class="bt"></div>
</body></html>
